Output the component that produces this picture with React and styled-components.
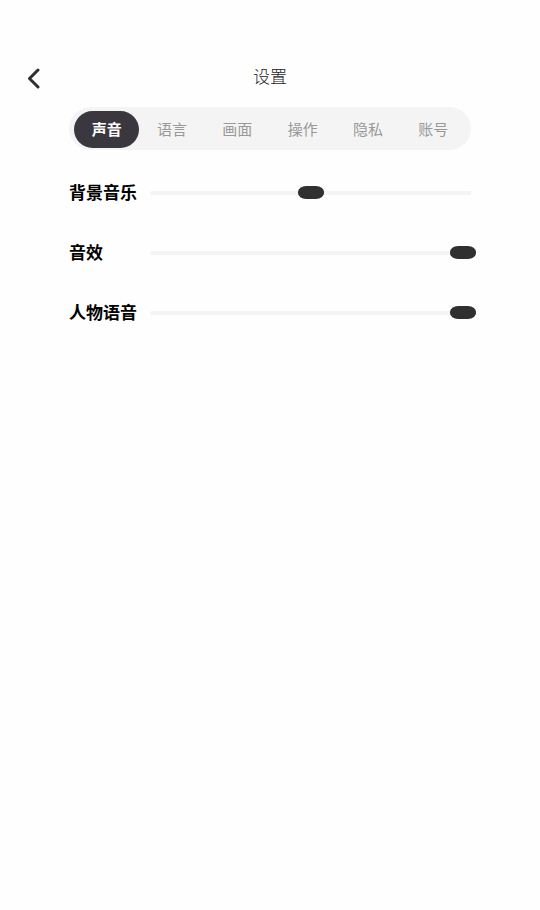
import React, { useState } from 'react';
import styled, { createGlobalStyle } from 'styled-components';

const GlobalStyle = createGlobalStyle`
    * {
        box-sizing: border-box;
    }

    body {
        margin: 0;
        background: #fefefe;
        color: #000;
        font-family: "Noto Sans CJK SC", sans-serif;
    }

    button, input {
        font-family: inherit;
    }
`

const Page = styled.main`
    min-height: 100vh;
    padding-top: 60px;
`

const Header = styled.header`
    display: grid;
    grid-template-columns: 44px 1fr 44px;
    align-items: center;
    height: 36px;
    padding: 0 12px;
`

const BackButton = styled.button`
    display: flex;
    align-items: center;
    justify-content: center;
    height: 36px;
    padding: 0;
    border: 0;
    background: none;
    color: #303032;
    cursor: pointer;
`

const Title = styled.h1`
    margin: 0;
    padding-bottom: 4px;
    color: #222;
    font-size: 17px;
    font-weight: 300;
    line-height: 24px;
    text-align: center;
`

const Content = styled.div`
    padding: 11px 69px 0;
`

const TabBar = styled.div`
    display: flex;
    padding: 4px 5px 2px;
    border-radius: 22px;
    background: #f4f4f4;
`

const Tab = styled.button`
    flex: 1;
    height: 37px;
    padding: 0 0 2px;
    border: 0;
    border-radius: 20px;
    background: ${({ $active }) => ($active ? '#3b373e' : 'transparent')};
    color: ${({ $active }) => ($active ? '#fff' : '#999')};
    font-size: 15px;
    font-weight: ${({ $active }) => ($active ? 700 : 400)};
    line-height: 24px;
    cursor: pointer;
`

const Settings = styled.div`
    display: flex;
    flex-direction: column;
    gap: 36px;
    padding-top: 31px;
`

const Row = styled.div`
    display: flex;
    align-items: center;
    height: 24px;
`

const Label = styled.label`
    width: 81px;
    padding-bottom: 2px;
    font-size: 17px;
    font-weight: 700;
    line-height: 24px;
`

const Track = styled.div`
    display: flex;
    flex: 1;
    align-items: center;
    height: 4px;
    border-radius: 2px 0 0 2px;
    background: #f4f4f4;
`

// wider than the track so the thumb hangs over its ends
const Slider = styled.input`
    flex: 1;
    min-width: 0;
    height: 13px;
    margin: 0 -5px 1px;
    appearance: none;
    background: transparent;
    cursor: pointer;

    &::-webkit-slider-thumb {
        appearance: none;
        width: 26px;
        height: 13px;
        border: 0;
        border-radius: 8px / 6px;
        background: #303030;
    }

    &::-moz-range-thumb {
        width: 26px;
        height: 13px;
        border: 0;
        border-radius: 8px / 6px;
        background: #303030;
    }
`

const tabs = ['声音', '语言', '画面', '操作', '隐私', '账号'];

const sliders = [
    { id: 'music', label: '背景音乐', value: 50 },
    { id: 'effects', label: '音效', value: 100 },
    { id: 'voice', label: '人物语音', value: 100 },
];

const VolumeRow = ({ id, label, value }) => (
    <Row>
        <Label htmlFor={id}>{label}</Label>
        <Track>
            <Slider id={id} type="range" min="0" max="100" defaultValue={value} />
        </Track>
    </Row>
)

const App = () => {

    const [active, setActive] = useState('声音');

    return (
        <Page>
            <GlobalStyle />
            <Header>
                <BackButton type="button" aria-label="返回">
                    <svg width="14" height="22" viewBox="0 0 14 22" fill="none" stroke="currentColor" strokeWidth="3" strokeLinecap="round" strokeLinejoin="round">
                        <path d="M11 3 2.5 11.5l8.5 8.5" />
                    </svg>
                </BackButton>
                <Title>设置</Title>
            </Header>
            <Content>
                <TabBar role="tablist">
                    {tabs.map(tab => (
                        <Tab key={tab} type="button" role="tab" aria-selected={tab === active} $active={tab === active} onClick={() => setActive(tab)}>{tab}</Tab>
                    ))}
                </TabBar>
                <Settings>
                    {sliders.map(slider => <VolumeRow key={slider.id} {...slider} />)}
                </Settings>
            </Content>
        </Page>
    )
}

export default App;
